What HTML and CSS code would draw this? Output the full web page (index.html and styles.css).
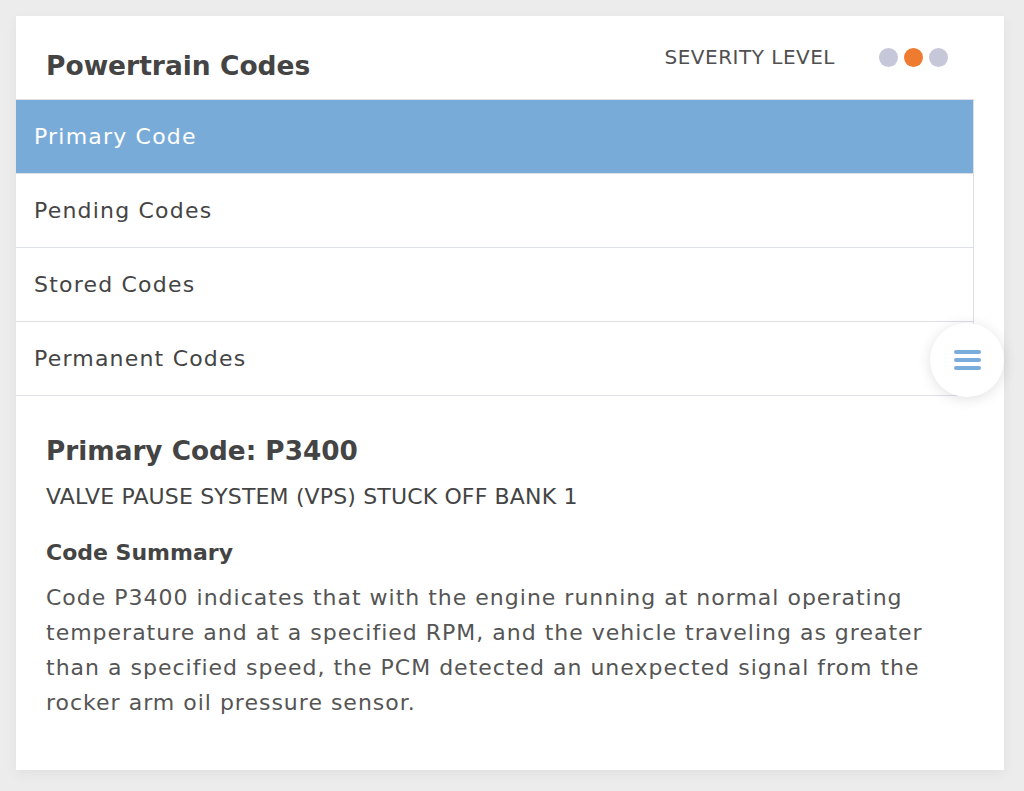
FILE: index.html
```html
<!DOCTYPE html>
<html>
<head>
<meta charset="utf-8">
<link rel="stylesheet" href="styles.css">
</head>
<body>
<div class="card">
  <div class="card-head">
    <h1 class="title">Powertrain Codes</h1>
    <div class="severity">
      <span class="severity-label">SEVERITY LEVEL</span>
      <span class="dots">
        <span class="dot"></span>
        <span class="dot dot-on"></span>
        <span class="dot"></span>
      </span>
    </div>
  </div>
  <div class="list-wrap">
    <ul class="code-list">
      <li class="code-item active">Primary Code</li>
      <li class="code-item">Pending Codes</li>
      <li class="code-item">Stored Codes</li>
      <li class="code-item">Permanent Codes</li>
    </ul>
    <button class="fab" aria-label="menu">
      <svg width="27" height="22" viewBox="0 0 27 22">
        <g stroke="#7aaddb" stroke-width="4" stroke-linecap="round">
          <line x1="2" y1="3" x2="25" y2="3"/>
          <line x1="2" y1="11" x2="25" y2="11"/>
          <line x1="2" y1="19" x2="25" y2="19"/>
        </g>
      </svg>
    </button>
  </div>
  <div class="detail">
    <h2 class="detail-title">Primary Code: P3400</h2>
    <p class="detail-sub">VALVE PAUSE SYSTEM (VPS) STUCK OFF BANK 1</p>
    <h3 class="summary-title">Code Summary</h3>
    <p class="summary">Code P3400 indicates that with the engine running at normal operating temperature and at a specified RPM, and the vehicle traveling as greater than a specified speed, the PCM detected an unexpected signal from the rocker arm oil pressure sensor.</p>
  </div>
</div>
</body>
</html>
```
FILE: styles.css
```css
* { box-sizing: border-box; }
html, body { margin: 0; padding: 0; }
body {
  background: #ececec;
  font-family: "DejaVu Sans", "Open Sans", sans-serif;
  color: #444;
  padding: 16px 20px 21px 16px;
}
.card {
  background: #fff;
  height: 754px;
  box-shadow: 0 4px 12px rgba(0,0,0,0.05);
}
.card-head {
  display: flex;
  justify-content: space-between;
  align-items: flex-start;
  height: 83px;
  padding: 0 56px 0 30px;
}
.title {
  margin: 33px 0 0;
  font-size: 26.5px;
  font-weight: 700;
  color: #444;
  line-height: 34px;
}
.severity {
  display: flex;
  align-items: center;
  margin-top: 28px;
}
.severity-label {
  font-size: 20px;
  letter-spacing: 0.5px;
  color: #505050;
  line-height: 26px;
}
.dots { display: flex; gap: 6px; margin-left: 44px; }
.dot {
  width: 19px; height: 19px; border-radius: 50%;
  background: #c6c7d8;
}
.dot-on { background: #ef7b31; }
.list-wrap {
  position: relative;
  margin-right: 30px;
}
.code-list {
  list-style: none;
  margin: 0;
  padding: 0;
  border-top: 1px solid #dcdfe6;
  border-right: 1px solid #dcdfe6;
}
.code-item {
  height: 74px;
  display: flex;
  align-items: center;
  padding-left: 18px;
  font-size: 22px;
  letter-spacing: 1.2px;
  color: #444;
  border-bottom: 1px solid #dcdfe6;
}
.code-item.active {
  background: #79abd9;
  color: #fff;
}
.fab {
  position: absolute;
  right: -30px;
  top: 224px;
  width: 74px;
  height: 74px;
  border-radius: 50%;
  border: none;
  background: #fff;
  box-shadow: 0 2px 14px rgba(0,0,0,0.12);
  display: flex;
  align-items: center;
  justify-content: center;
  padding: 0;
}
.detail {
  padding: 36px 57px 0 30px;
}
.detail-title {
  margin: 0;
  font-size: 26.3px;
  font-weight: 700;
  line-height: 38px;
  color: #444;
}
.detail-sub {
  margin: 13px 0 0;
  font-size: 22px;
  letter-spacing: 0.15px;
  line-height: 28px;
  color: #444;
}
.summary-title {
  margin: 28px 0 0;
  font-size: 22px;
  font-weight: 700;
  line-height: 28px;
  color: #444;
}
.summary {
  margin: 13px 0 0;
  font-size: 22px;
  letter-spacing: 1px;
  line-height: 35px;
  color: #555;
}
```
